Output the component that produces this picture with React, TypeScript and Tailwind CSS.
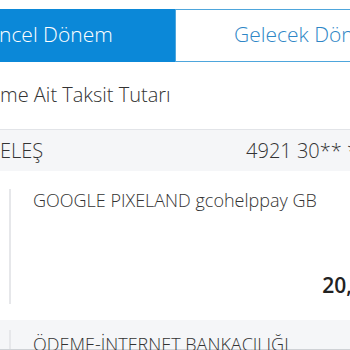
import React from "react";

export default function App() {
  return (
    <div
      className="w-[350px] h-[350px] overflow-hidden bg-white text-[#3a3a3a] relative"
      style={{ fontFamily: '"Open Sans", "Noto Sans", sans-serif' }}
    >
      <div className="mt-[9px] flex h-[53px]">
        <div className="w-[175px] shrink-0 bg-[#0b88d8] flex items-center text-white text-[21px] font-light">
          <span className="-ml-[1px] pb-[1px]">ncel Dönem</span>
        </div>
        <div className="w-[200px] shrink-0 border border-[#4ea6dc] flex items-center pl-[58px] text-[#2e86c6] text-[21px] font-light whitespace-nowrap">
          <span className="pb-[1px]">Gelecek Dönem</span>
        </div>
      </div>

      <div className="mt-[19px] h-[28px] flex items-center text-[20px] font-light text-[#333] whitespace-nowrap">
        me Ait Taksit Tutarı
      </div>

      <div className="mt-[20px] h-[42px] border-t border-[#e2e4e8] bg-[#f5f6f8] flex items-center justify-between text-[20px] font-light text-[#333] whitespace-nowrap">
        <span>ELEŞ</span>
        <span className="-mr-[19px]">4921 30** **</span>
      </div>

      <div className="h-[149px] flex">
        <div className="ml-[9px] mt-[18px] mb-[16px] w-[2px] bg-[#e6e7ea]" />
        <div className="flex-1 flex flex-col pl-[22px] pt-[16px]">
          <div className="text-[18px] font-light text-[#333] whitespace-nowrap leading-[26px]">
            GOOGLE PIXELAND gcohelppay GB
          </div>
          <div className="mt-auto mb-[19px] flex justify-end">
            <span className="-mr-[26px] text-[21px] font-semibold text-[#222] whitespace-nowrap">
              20,00
            </span>
          </div>
        </div>
      </div>

      <div className="h-[30px] bg-[#f5f6f8] flex border-b border-[#cfd2d6]">
        <div className="ml-[9px] mt-[10px] w-[2px] bg-[#e6e7ea]" />
        <div className="pl-[22px] pt-[11px] text-[18px] font-light text-[#333] whitespace-nowrap leading-[26px]">
          ÖDEME-İNTERNET BANKACILIĞI
        </div>
      </div>
    </div>
  );
}
